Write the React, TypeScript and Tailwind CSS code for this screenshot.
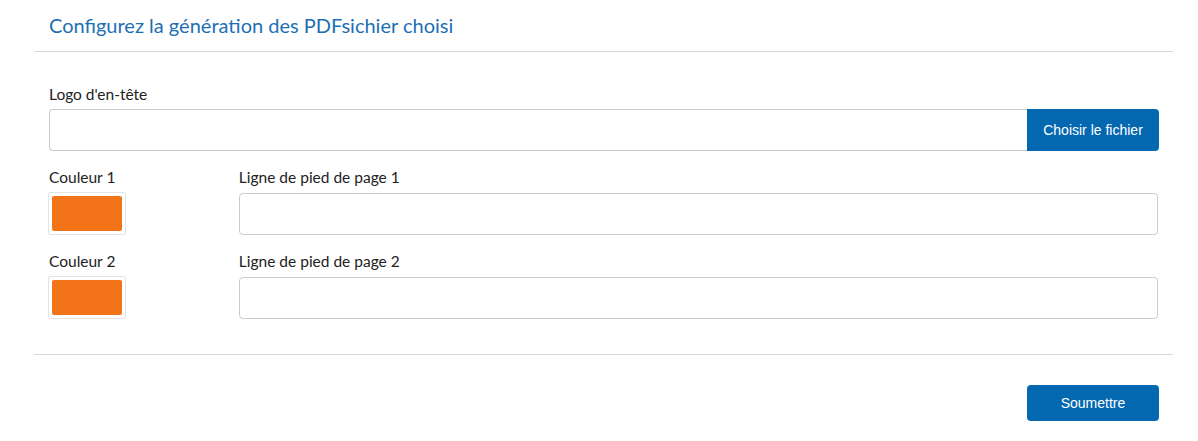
export default function App() {
  const rows = [
    { color: 'Couleur 1', footer: 'Ligne de pied de page 1' },
    { color: 'Couleur 2', footer: 'Ligne de pied de page 2' },
  ];

  return (
    <div className="w-[1198px] h-[441px] bg-white font-['Lato','Noto_Sans',sans-serif] text-[#222]">
      <div className="mx-[34px] w-[1139px]">
        {/* Header */}
        <div className="h-[52px] border-b border-[#d9d9d9] px-[15px] flex items-center">
          <h1 className="text-[20px] leading-none text-[#1d6fb4] -mt-[2px]">
            Configurez la génération des PDFsichier choisi
          </h1>
        </div>

        {/* Body */}
        <div className="px-[15px] pt-[32px] pb-[35px] border-b border-[#d9d9d9]">
          <label className="block text-[15.5px] leading-[20px] mb-[5px]">Logo d'en-tête</label>
          <div className="flex h-[42px] w-[1110px]">
            <div className="flex-1 border border-[#ccc] border-r-0 rounded-l-[4px]" />
            <button className="w-[132px] bg-[#0468b1] text-white text-[14px] font-['Liberation_Sans',Arial,sans-serif] rounded-r-[4px]">
              Choisir le fichier
            </button>
          </div>

          {rows.map((r) => (
            <div key={r.color} className="flex mt-[16px]">
              <div className="w-[190px]">
                <label className="block text-[15.5px] leading-[20px] mb-[5px]">{r.color}</label>
                <div className="-ml-px w-[78px] h-[43px] border border-[#e3e3e3] rounded-[2px] p-[3px]">
                  <div className="w-full h-full bg-[#f37318] rounded-[2px]" />
                </div>
              </div>
              <div className="w-[920px]">
                <label className="block text-[15.5px] leading-[20px] mb-[6px]">{r.footer}</label>
                <div className="h-[42px] border border-[#ccc] rounded-[4px]" />
              </div>
            </div>
          ))}
        </div>

        {/* Footer */}
        <div className="pl-[15px] pr-[14px] pt-[30px] flex justify-end">
          <button className="w-[132px] h-[36px] bg-[#0468b1] text-white text-[14px] font-['Liberation_Sans',Arial,sans-serif] rounded-[4px]">
            Soumettre
          </button>
        </div>
      </div>
    </div>
  );
}
